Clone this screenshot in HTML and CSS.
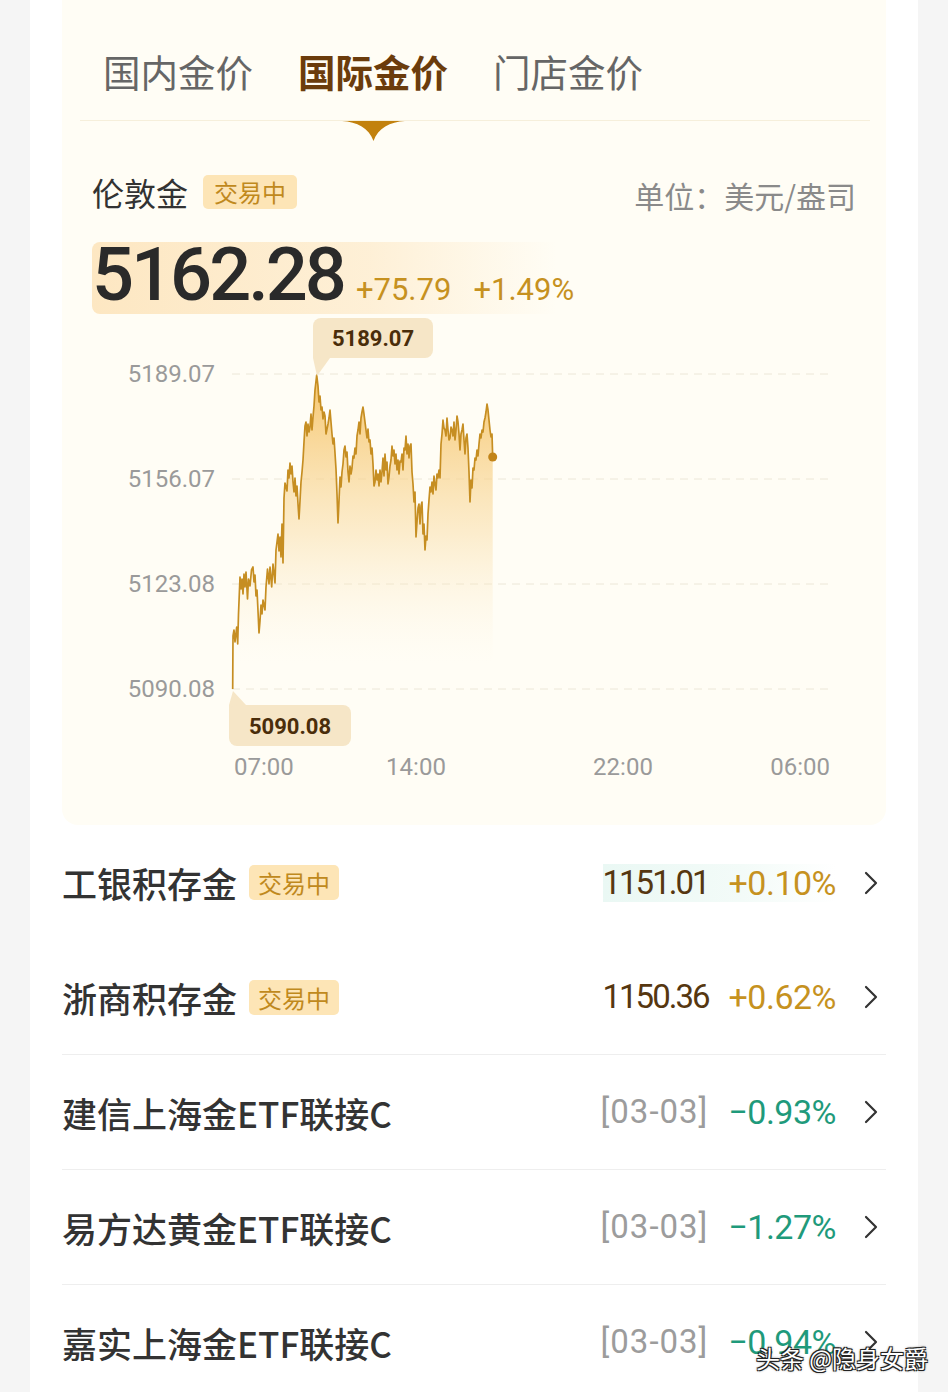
FILE: index.html
```html
<!DOCTYPE html>
<html lang="zh-CN">
<head>
    <meta charset="UTF-8">
    <meta name="viewport" content="width=device-width, initial-scale=1.0">
    <title>国际金价</title>
    <link rel="stylesheet" href="styles.css">
</head>
<body>
<div class="page">
    <div class="card">
        <section class="panel">
            <!-- Tabs -->
            <nav class="tabs">
                <span class="tab">国内金价</span>
                <span class="tab active">国际金价
                    <svg class="tab-arrow" width="63" height="20" viewBox="0 0 63 20">
                        <path d="M0 0 H63 C48 1 36 7 31.5 20 C27 7 15 1 0 0 Z" fill="#c2810d"/>
                    </svg>
                </span>
                <span class="tab">门店金价</span>
            </nav>

            <!-- Quote header -->
            <div class="quote-head">
                <div class="quote-name">伦敦金<span class="badge">交易中</span></div>
                <div class="unit">单位：美元/盎司</div>
            </div>

            <div class="quote-price">
                <span class="price">5162.28</span>
                <span class="chg">+75.79</span>
                <span class="chg">+1.49%</span>
            </div>

            <!-- Intraday chart -->
            <svg class="chart" width="824" height="472" viewBox="0 0 824 472">
                <defs>
                    <linearGradient id="fillGrad" x1="0" y1="0" x2="0" y2="290" gradientUnits="userSpaceOnUse">
                        <stop offset="0" stop-color="#f5bf5c" stop-opacity="0.9"/>
                        <stop offset="0.55" stop-color="#f9dca4" stop-opacity="0.5"/>
                        <stop offset="1" stop-color="#fdf3de" stop-opacity="0"/>
                    </linearGradient>
                </defs>

                <g class="y-labels">
                    <text x="153" y="64">5189.07</text>
                    <text x="153" y="169">5156.07</text>
                    <text x="153" y="274">5123.08</text>
                    <text x="153" y="379">5090.08</text>
                </g>

                <g transform="translate(170,56)">
                    <g class="grid">
                        <line x1="0" y1="0" x2="598" y2="0"/>
                        <line x1="0" y1="105" x2="598" y2="105"/>
                        <line x1="0" y1="210" x2="598" y2="210"/>
                        <line x1="0" y1="315" x2="598" y2="315"/>
                    </g>
                    <polygon class="area" fill="url(#fillGrad)" points="0.7,315 1,262 2,256 3,268 4.7,253 5.7,270 6.5,240 8,203 9,215 10,205 11,220 12,200 13,213 14,198 15.5,225 16.5,205 18,212 19.5,196 21,193 22,208 23,201 24,222 25,216 26,237 27,259 28,247 29,231 30,240 31,226 33,236 34,213 35.5,195 37,210 38,193 39.7,213 41,190 43,209 44,176 46,160 47,177 48,163 49,183 50,150 51,189 52,124 53,109 55,117 56,96 57,104 58,89 59,100 60,92 61,108 62,118 63,104 64,122 65,112 66,130 67,145 68,127 69,108 70,98 71,86 72,68 73,52 74,48 75,62 76,50 77,58 78,53 79,40 80,56 81,43 82,32 83,16 84.7,1 86,12 87,28 88,22 89,36 90,33 91,45 92,38 93,42 94,60 96,50 97,44 98,36 99,48 100,60 101,70 102,64 103,79 104,95 105,120 106,149 107,127 108,103 109,113 110,98 111,90 112,76 113,72 114,83 115,78 116,98 117,108 118,92 119,100 120,94 121,82 122,84 123,74 124,80 125,62 126,56 127,48 128,60 129,44 130,38 131,33 132,40 133,48 134,56 135,64 136,55 137,68 138,66 139,80 140,74 141,90 142,112 143,108 144,96 145,106 146,100 147,112 148,96 149,108 150,98 151,84 152,102 153,80 154,96 155,88 156,110 157,103 158,92 159,86 160,72 161,82 162,76 163,90 164,80 165,96 166,86 167,100 168,87 169,88 170,80 171,96 172,74 173,76 174,62 175,80 176,70 177,84 178,72 179,70 180,98 181,110 182,128 183,118 184,163 185,148 186,134 187,130 188,150 189,132 190,128 191,160 192,150 193,176 194,162 195,166 196,140 197,126 198,113 199,118 200,108 201,120 202,102 203,110 204,116 205,100 206,104 207,96 208,104 209,70 210,60 211,46 212,54 213,56 214,62 215,44 216,56 217,66 218,64 219,53 220,56 221,62 222,48 223,66 224,56 225,42 226,48 227,60 228,76 229,60 230,56 231,50 232,66 233,80 234,64 235,60 236,74 237,98 238,128 239,106 240,114 241,94 242,96 243,84 244,86 245,76 246,82 247,70 248,60 249,64 250,56 251,58 252,48 253,44 254,38 255,30 256,36 257,46 258,56 259,63 260,60 260.7,83 260.7,315"/>
                    <polyline class="line" points="0.7,315 1,262 2,256 3,268 4.7,253 5.7,270 6.5,240 8,203 9,215 10,205 11,220 12,200 13,213 14,198 15.5,225 16.5,205 18,212 19.5,196 21,193 22,208 23,201 24,222 25,216 26,237 27,259 28,247 29,231 30,240 31,226 33,236 34,213 35.5,195 37,210 38,193 39.7,213 41,190 43,209 44,176 46,160 47,177 48,163 49,183 50,150 51,189 52,124 53,109 55,117 56,96 57,104 58,89 59,100 60,92 61,108 62,118 63,104 64,122 65,112 66,130 67,145 68,127 69,108 70,98 71,86 72,68 73,52 74,48 75,62 76,50 77,58 78,53 79,40 80,56 81,43 82,32 83,16 84.7,1 86,12 87,28 88,22 89,36 90,33 91,45 92,38 93,42 94,60 96,50 97,44 98,36 99,48 100,60 101,70 102,64 103,79 104,95 105,120 106,149 107,127 108,103 109,113 110,98 111,90 112,76 113,72 114,83 115,78 116,98 117,108 118,92 119,100 120,94 121,82 122,84 123,74 124,80 125,62 126,56 127,48 128,60 129,44 130,38 131,33 132,40 133,48 134,56 135,64 136,55 137,68 138,66 139,80 140,74 141,90 142,112 143,108 144,96 145,106 146,100 147,112 148,96 149,108 150,98 151,84 152,102 153,80 154,96 155,88 156,110 157,103 158,92 159,86 160,72 161,82 162,76 163,90 164,80 165,96 166,86 167,100 168,87 169,88 170,80 171,96 172,74 173,76 174,62 175,80 176,70 177,84 178,72 179,70 180,98 181,110 182,128 183,118 184,163 185,148 186,134 187,130 188,150 189,132 190,128 191,160 192,150 193,176 194,162 195,166 196,140 197,126 198,113 199,118 200,108 201,120 202,102 203,110 204,116 205,100 206,104 207,96 208,104 209,70 210,60 211,46 212,54 213,56 214,62 215,44 216,56 217,66 218,64 219,53 220,56 221,62 222,48 223,66 224,56 225,42 226,48 227,60 228,76 229,60 230,56 231,50 232,66 233,80 234,64 235,60 236,74 237,98 238,128 239,106 240,114 241,94 242,96 243,84 244,86 245,76 246,82 247,70 248,60 249,64 250,56 251,58 252,48 253,44 254,38 255,30 256,36 257,46 258,56 259,63 260,60 260.7,83"/>
                    <circle cx="260.7" cy="83" r="4.5" fill="#c28419"/>
                </g>

                <!-- high / low markers -->
                <g class="marker">
                    <path d="M251 30 V40 L255 58 L268 40 Z"/>
                    <rect x="251" y="0" width="120" height="40" rx="8"/>
                    <text x="311" y="28">5189.07</text>
                </g>
                <g class="marker">
                    <path d="M167 398 V387 L171 373 L184 387 Z"/>
                    <rect x="167" y="387" width="122" height="41" rx="8"/>
                    <text x="228" y="415.5">5090.08</text>
                </g>

                <g class="x-labels">
                    <text class="first" x="172" y="457">07:00</text>
                    <text x="354" y="457">14:00</text>
                    <text x="561" y="457">22:00</text>
                    <text class="last" x="768" y="457">06:00</text>
                </g>
            </svg>
        </section>

        <!-- Gold products -->
        <ul class="fund-list">
            <li class="fund-row">
                <span class="fund-name">工银积存金</span>
                <span class="badge badge-sm">交易中</span>
                <span class="fund-data flash">
                    <span class="val">1151.01</span>
                    <span class="pct up">+0.10%</span>
                </span>
                <svg class="chevron" width="14" height="24" viewBox="0 0 14 24"><path d="M2 2 L12 12 L2 22"/></svg>
            </li>
            <li class="fund-row">
                <span class="fund-name">浙商积存金</span>
                <span class="badge badge-sm">交易中</span>
                <span class="fund-data">
                    <span class="val">1150.36</span>
                    <span class="pct up">+0.62%</span>
                </span>
                <svg class="chevron" width="14" height="24" viewBox="0 0 14 24"><path d="M2 2 L12 12 L2 22"/></svg>
            </li>
            <li class="fund-row">
                <span class="fund-name">建信上海金ETF联接C</span>
                <span class="fund-data">
                    <span class="date">[03-03]</span>
                    <span class="pct down">−0.93%</span>
                </span>
                <svg class="chevron" width="14" height="24" viewBox="0 0 14 24"><path d="M2 2 L12 12 L2 22"/></svg>
            </li>
            <li class="fund-row">
                <span class="fund-name">易方达黄金ETF联接C</span>
                <span class="fund-data">
                    <span class="date">[03-03]</span>
                    <span class="pct down">−1.27%</span>
                </span>
                <svg class="chevron" width="14" height="24" viewBox="0 0 14 24"><path d="M2 2 L12 12 L2 22"/></svg>
            </li>
            <li class="fund-row">
                <span class="fund-name">嘉实上海金ETF联接C</span>
                <span class="fund-data">
                    <span class="date">[03-03]</span>
                    <span class="pct down">−0.94%</span>
                </span>
                <svg class="chevron" width="14" height="24" viewBox="0 0 14 24"><path d="M2 2 L12 12 L2 22"/></svg>
            </li>
        </ul>
    </div>
    <div class="watermark">头条 @隐身女爵</div>
</div>
</body>
</html>
```

FILE: styles.css
```css
body {
    margin: 0;
    background-color: #f5f5f5;
    font-family: "Noto Sans CJK SC", "Noto Sans", sans-serif;
    color: #333;
}
.page {
    position: relative;
    width: 948px;
    height: 1392px;
    overflow: hidden;
}
.card {
    margin: 0 30px;
    padding: 0 32px;
    min-height: 1392px;
    background-color: #fff;
}

/* gold panel */
.panel {
    height: 825px;
    box-sizing: border-box;
    background-color: #fffdf5;
    border-radius: 0 0 16px 16px;
}
.tabs {
    display: flex;
    gap: 45px;
    margin: 0 16px 0 18px;
    padding: 46px 0 0 23px;
    border-bottom: 1px solid #f6efdb;
}
.tab {
    position: relative;
    font-size: 37.5px;
    line-height: 50px;
    padding-bottom: 24px;
    color: #666;
}
.tab.active {
    color: #6b3c0c;
    font-weight: 700;
}
.tab-arrow {
    position: absolute;
    top: calc(100% + 1px);
    left: 50%;
    margin-left: -31px;
}

.quote-head {
    display: flex;
    align-items: center;
    justify-content: space-between;
    margin: 51px 30px 0;
    height: 40px;
}
.quote-name {
    display: flex;
    align-items: center;
    font-size: 32px;
    color: #333;
}
.badge {
    margin-left: 15px;
    padding: 0 11px;
    height: 34px;
    line-height: 34px;
    font-size: 24px;
    font-weight: 400;
    color: #c0891d;
    background-color: #fde5b6;
    border-radius: 5px;
}
.unit {
    font-size: 30px;
    color: #8a8a8a;
    padding-top: 6px;
}

.quote-price {
    display: flex;
    align-items: baseline;
    margin: 30px 30px 0;
    height: 72px;
    font-family: Roboto, "Noto Sans", sans-serif;
    background: linear-gradient(90deg, #fde7c2 0, rgba(253, 231, 194, 0.6) 60%, rgba(253, 231, 194, 0) 100%) no-repeat;
    background-size: 465px 100%;
    border-radius: 8px;
}
.price {
    font-size: 74px;
    line-height: 66px;
    font-weight: 500;
    letter-spacing: -3px;
    color: #2a2a2a;
}
.chg {
    font-size: 31px;
    color: #c6911f;
    margin-left: 22px;
}
.price + .chg {
    margin-left: 12px;
}

.chart {
    display: block;
    margin-top: 4px;
    font-family: Roboto, "Noto Sans", sans-serif;
}
.y-labels text {
    font-size: 24px;
    fill: #9a9a9a;
    text-anchor: end;
}
.x-labels text {
    font-size: 24px;
    fill: #9a9a9a;
    text-anchor: middle;
}
.x-labels text.first {
    text-anchor: start;
}
.x-labels text.last {
    text-anchor: end;
}
.grid line {
    stroke: #ece7d8;
    stroke-width: 1;
    stroke-dasharray: 8 6;
}
.line {
    fill: none;
    stroke: #c68e22;
    stroke-width: 1.7;
    stroke-linejoin: round;
}
.marker rect,
.marker path {
    fill: #f6e6c7;
}
.marker text {
    font-size: 22px;
    font-weight: 700;
    fill: #4a2d0a;
    text-anchor: middle;
}

/* product list */
.fund-list {
    margin: 0;
    padding: 0;
    list-style: none;
}
.fund-row {
    display: flex;
    align-items: center;
    height: 115px;
    box-sizing: border-box;
    padding-right: 8px;
}
.fund-row + .fund-row {
    border-bottom: 1px solid #eeeeee;
}
.fund-name {
    font-size: 35px;
    font-weight: 500;
    color: #333;
}
.badge-sm {
    margin-left: 12px;
    height: 35px;
    line-height: 35px;
    padding: 0 9px;
}
.fund-data {
    display: flex;
    align-items: center;
    gap: 20px;
    margin-left: auto;
    font-family: Roboto, "Noto Sans", sans-serif;
    font-size: 33px;
    line-height: 38px;
}
.fund-data.flash {
    background: linear-gradient(90deg, #eaf8f4 0, #f3fbf8 60%, rgba(255, 255, 255, 0) 100%);
}
.val {
    color: #563710;
    letter-spacing: -2px;
}
.date {
    color: #9c9c9c;
    letter-spacing: 1px;
}
.pct {
    font-size: 34px;
    letter-spacing: -0.5px;
}
.pct.up {
    color: #c6921f;
}
.pct.down {
    color: #1f9a7b;
}
.chevron {
    margin-left: 28px;
}
.chevron path {
    fill: none;
    stroke: #333;
    stroke-width: 2.2;
    stroke-linecap: round;
    stroke-linejoin: round;
}

.watermark {
    position: absolute;
    right: 20px;
    top: 1341px;
    font-size: 24px;
    line-height: 34px;
    color: #fff;
    text-shadow: -1px -1px 0 #222, 1px -1px 0 #222, -1px 1px 0 #222, 1px 1px 0 #222, 0 0 3px #000;
}
```
